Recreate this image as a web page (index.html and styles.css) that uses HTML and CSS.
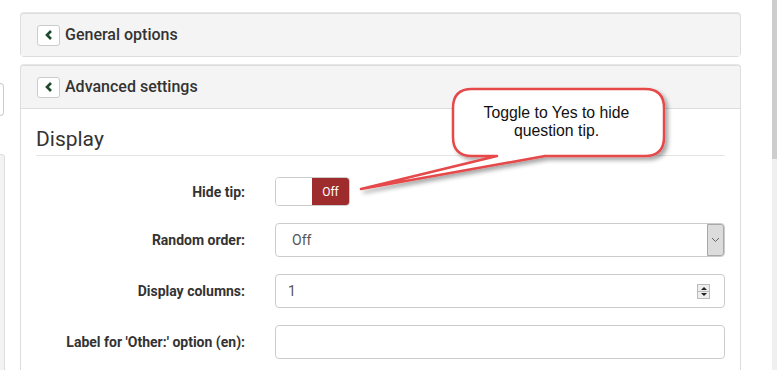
FILE: index.html
```html
<!DOCTYPE html>
<html lang="en">

<head>
    <meta charset="UTF-8">
    <meta name="viewport" content="width=device-width, initial-scale=1.0">
    <title>Question settings</title>

    <link rel="stylesheet" href="styles.css">

</head>

<body>
    <div class="page">
        <!-- Left sidebar (mostly scrolled out of view) -->
        <aside class="side">
            <div class="side-box"></div>
            <div class="side-list"></div>
        </aside>

        <main class="main">
            <!-- General options (collapsed) -->
            <section class="panel">
                <header class="panel-head">
                    <button class="collapse-btn">
                        <svg width="8" height="10" viewBox="0 0 8 10"><path d="M6 1 L2 5 L6 9" fill="none" stroke="#1d4a2c" stroke-width="2.6"/></svg>
                    </button>
                    <span class="panel-title">General options</span>
                </header>
            </section>

            <!-- Advanced settings (open) -->
            <section class="panel panel-open">
                <header class="panel-head">
                    <button class="collapse-btn">
                        <svg width="8" height="10" viewBox="0 0 8 10"><path d="M6 1 L2 5 L6 9" fill="none" stroke="#1d4a2c" stroke-width="2.6"/></svg>
                    </button>
                    <span class="panel-title">Advanced settings</span>
                </header>

                <div class="panel-body">
                    <h3 class="group-title">Display</h3>

                    <div class="form-grid">
                        <label class="form-label">Hide tip:</label>
                        <div class="switch">
                            <span class="switch-on"></span>
                            <span class="switch-off">Off</span>
                        </div>

                        <label class="form-label">Random order:</label>
                        <div class="field select">
                            <span class="field-value">Off</span>
                            <span class="select-arrow">
                                <svg width="9" height="6" viewBox="0 0 9 6"><path d="M1 1 L4.5 4.5 L8 1" fill="none" stroke="#666" stroke-width="1"/></svg>
                            </span>
                        </div>

                        <label class="form-label">Display columns:</label>
                        <div class="field number">
                            <span class="field-value">1</span>
                            <span class="spinner">
                                <span class="spin spin-up"></span>
                                <span class="spin spin-down"></span>
                            </span>
                        </div>

                        <label class="form-label">Label for 'Other:' option (en):</label>
                        <div class="field"></div>
                    </div>
                </div>
            </section>
        </main>

        <div class="scrollbar"><div class="scroll-thumb"></div></div>
    </div>

    <!-- Annotation callout -->
    <div class="callout">
        <svg class="callout-shape" width="330" height="125" viewBox="0 0 330 125">
            <defs>
                <filter id="shadow" x="-10%" y="-10%" width="130%" height="140%">
                    <feDropShadow dx="3" dy="3" stdDeviation="2" flood-color="#000" flood-opacity="0.35"/>
                </filter>
            </defs>
            <path d="M122 9 H295 Q314 9 314 28 V57 Q314 76 295 76 H195 L11 109 L147 76 H122 Q103 76 103 57 V28 Q103 9 122 9 Z"
                  fill="#fff" stroke="#e5484a" stroke-width="2.5" stroke-linejoin="round" filter="url(#shadow)"/>
        </svg>
        <div class="callout-text">Toggle to Yes to hide<br>question tip.</div>
    </div>
</body>

</html>
```

FILE: styles.css
```css
body {
    margin: 0;
    font-family: Roboto, 'Noto Sans', sans-serif;
    background: #fff;
    color: #333;
    overflow: hidden;
}

.page {
    display: flex;
    height: 370px;
    overflow: hidden;
}

/* Sidebar */
.side {
    width: 5px;
    flex: none;
}

.side-box {
    margin-top: 83px;
    height: 31px;
    width: 3px;
    border: 1px solid #ccc;
    border-left: none;
    border-radius: 0 4px 4px 0;
}

.side-list {
    margin-top: 38px;
    height: 300px;
    width: 4px;
    background: #f3f3f3;
    border: 1px solid #ddd;
    border-left: none;
    border-radius: 0 4px 0 0;
}

/* Main column */
.main {
    width: 721px;
    flex: none;
    margin-left: 15px;
    padding-top: 13px;
}

.panel {
    border: 1px solid #ddd;
    border-radius: 4px;
    background: #f4f4f4;
    box-shadow: 0 -1px 0 #e6e6e6;
    margin-bottom: 8px;
}

.panel-open {
    background: #fff;
    height: 400px;
    border-bottom: none;
}

.panel-head {
    height: 42px;
    display: flex;
    align-items: center;
    padding: 0 16px;
    background: #f4f4f4;
    border-radius: 4px 4px 0 0;
}

.panel-open .panel-head {
    border-bottom: 1px solid #ddd;
}

.collapse-btn {
    width: 23px;
    height: 21px;
    padding: 0;
    margin: 0 5px 0 0;
    background: #fff;
    border: 1px solid #ccc;
    border-radius: 3px;
    display: flex;
    align-items: center;
    justify-content: center;
}

.panel-title {
    font-size: 16px;
    font-weight: 500;
    color: #333;
    margin-top: -2px;
}

.panel-body {
    padding: 18px 15px 0;
}

.group-title {
    margin: 0;
    font-size: 21px;
    font-weight: 400;
    line-height: 24px;
    color: #333;
    padding-bottom: 4px;
    border-bottom: 1px solid #e5e5e5;
}

/* Form */
.form-grid {
    display: grid;
    grid-template-columns: 209px 1fr;
    column-gap: 30px;
    row-gap: 17px;
    align-items: center;
    margin-top: 21px;
}

.form-label {
    text-align: right;
    font-size: 14px;
    font-weight: bold;
    color: #333;
}

.switch {
    display: flex;
    width: 75px;
    height: 29px;
    box-sizing: border-box;
    border: 1px solid #ccc;
    border-radius: 4px;
    overflow: hidden;
}

.switch-on {
    flex: 1;
    background: #fff;
}

.switch-off {
    width: 37px;
    background: #9e2c2c;
    color: #fff;
    font-size: 12px;
    display: flex;
    align-items: center;
    justify-content: center;
}

.field {
    height: 34px;
    box-sizing: border-box;
    border: 1px solid #ccc;
    border-radius: 4px;
    display: flex;
    align-items: center;
    font-size: 14px;
    color: #555;
}

.field-value {
    flex: 1;
    padding-left: 12px;
}

.select {
    align-items: stretch;
}

.select .field-value {
    padding-left: 16px;
    display: flex;
    align-items: center;
}

.select-arrow {
    width: 15px;
    border: 1px solid #a8a8a8;
    border-radius: 0 3px 3px 0;
    background: #dcdcdc;
    display: flex;
    align-items: center;
    justify-content: center;
}

.spinner {
    display: flex;
    flex-direction: column;
    width: 13px;
    height: 15px;
    margin-right: 14px;
    border: 1px solid #bbb;
    box-sizing: border-box;
}

.spin {
    flex: 1;
    background: #eee;
    position: relative;
}

.spin-up {
    border-bottom: 1px solid #bbb;
}

.spin-up::after,
.spin-down::after {
    content: "";
    position: absolute;
    left: 3px;
    border-left: 3px solid transparent;
    border-right: 3px solid transparent;
}

.spin-up::after {
    top: 2px;
    border-bottom: 3px solid #222;
}

.spin-down::after {
    top: 1px;
    border-top: 3px solid #222;
}

/* Scrollbar */
.scrollbar {
    margin-left: auto;
    width: 5px;
    height: 370px;
    background: #f0f0f0;
}

.scroll-thumb {
    height: 159px;
    background: #cdcdcd;
}

/* Callout annotation */
.callout {
    position: absolute;
    left: 350px;
    top: 80px;
    width: 330px;
    height: 125px;
}

.callout-shape {
    display: block;
}

.callout-text {
    position: absolute;
    left: 101px;
    top: 9px;
    width: 211px;
    padding-top: 15px;
    text-align: center;
    font-family: 'Liberation Sans', Arial, sans-serif;
    font-size: 15.8px;
    line-height: 18px;
    color: #111;
}
```
